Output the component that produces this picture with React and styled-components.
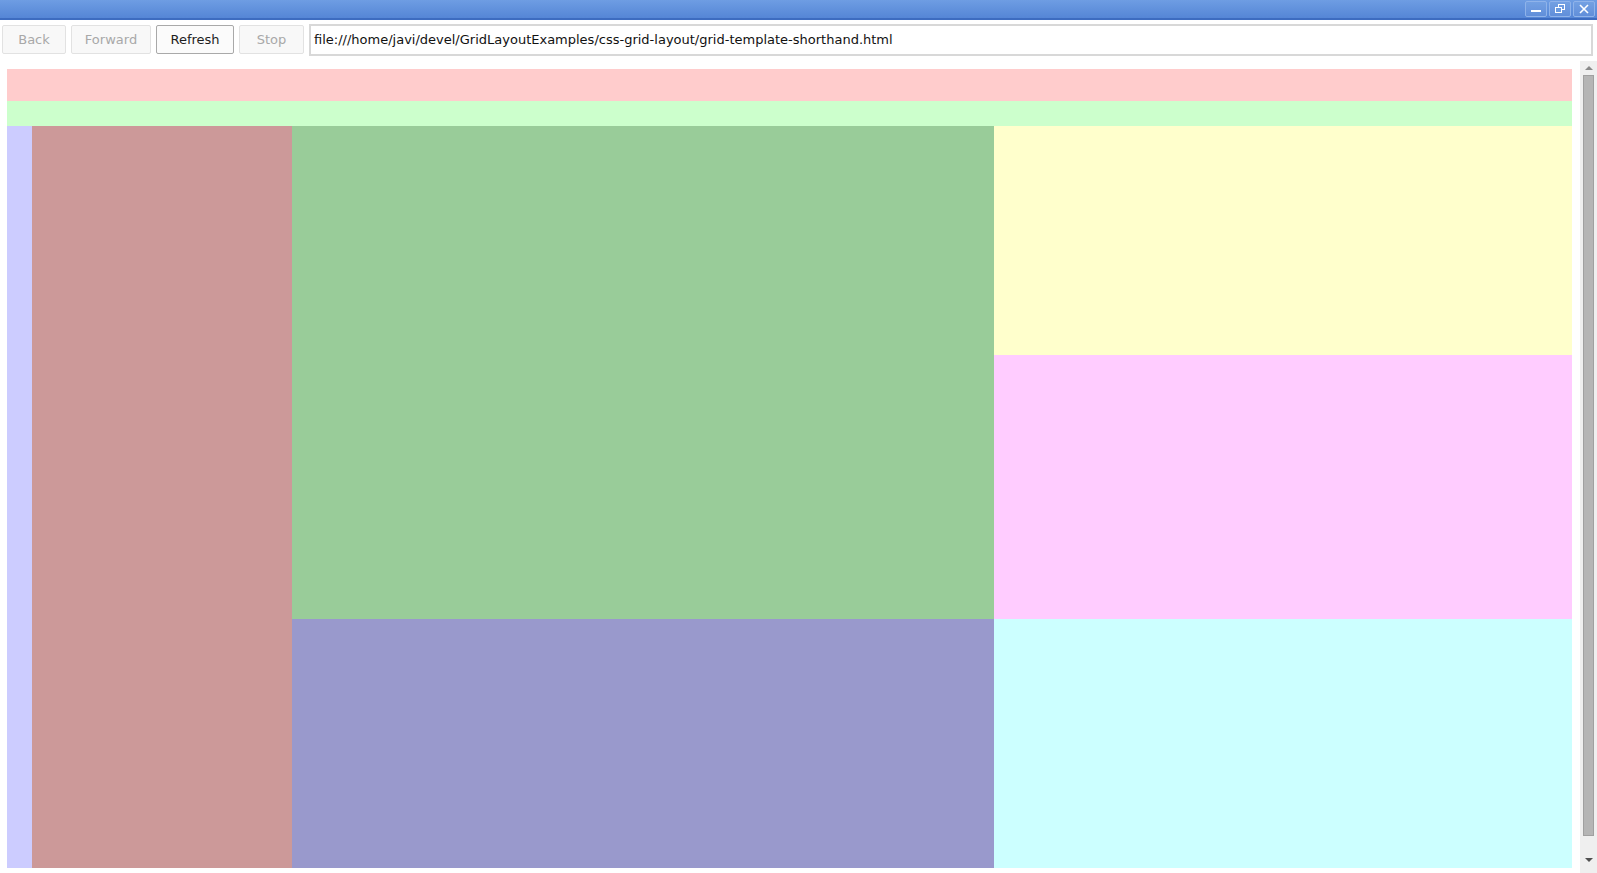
import React from "react";
import styled, { createGlobalStyle } from "styled-components";

const colors = {
  pink: "#ffcccc",
  mint: "#ccffcc",
  lavender: "#ccccff",
  rose: "#cc9999",
  sage: "#99cc99",
  cream: "#ffffcc",
  orchid: "#ffccff",
  periwinkle: "#9999cc",
  aqua: "#ccffff",
};

const areas = [
  { name: "head", color: colors.pink },
  { name: "nav", color: colors.mint },
  { name: "edge", color: colors.lavender },
  { name: "side", color: colors.rose },
  { name: "main", color: colors.sage },
  { name: "top", color: colors.cream },
  { name: "mid", color: colors.orchid },
  { name: "foot", color: colors.periwinkle },
  { name: "corner", color: colors.aqua },
];

const buttons = [
  { label: "Back", width: 64, enabled: false },
  { label: "Forward", width: 80, enabled: false },
  { label: "Refresh", width: 78, enabled: true },
  { label: "Stop", width: 65, enabled: false },
];

const App = () => {
  return (
    <StyledRoot>
      <GlobalStyle />
      <StyledTitleBar>
        <StyledWindowButton>
          <svg width="12" height="12" viewBox="0 0 12 12">
            <rect x="1" y="7" width="10" height="2" fill="#fff" />
          </svg>
        </StyledWindowButton>
        <StyledWindowButton>
          <svg width="12" height="12" viewBox="0 0 12 12" fill="none" stroke="#fff">
            <rect x="4.5" y="1.5" width="6" height="5" />
            <rect x="1.5" y="4.5" width="6" height="5" fill="#6b9be0" />
          </svg>
        </StyledWindowButton>
        <StyledWindowButton>
          <svg width="12" height="12" viewBox="0 0 12 12" stroke="#fff" strokeWidth="1.6">
            <path d="M2 2 L10 10 M10 2 L2 10" />
          </svg>
        </StyledWindowButton>
      </StyledTitleBar>
      <StyledToolbar>
        {buttons.map((b) => (
          <StyledButton key={b.label} width={b.width} enabled={b.enabled}>
            {b.label}
          </StyledButton>
        ))}
        <StyledAddress>
          file:///home/javi/devel/GridLayoutExamples/css-grid-layout/grid-template-shorthand.html
        </StyledAddress>
      </StyledToolbar>
      <StyledViewport>
        <StyledPage>
          <StyledGrid>
            {areas.map((a) => (
              <StyledCell key={a.name} area={a.name} color={a.color} />
            ))}
          </StyledGrid>
        </StyledPage>
        <StyledScrollbar>
          <StyledArrow />
          <StyledTrack>
            <StyledThumb />
          </StyledTrack>
          <StyledArrow down />
        </StyledScrollbar>
      </StyledViewport>
    </StyledRoot>
  );
};

export default App;

const GlobalStyle = createGlobalStyle`
  html, body {
    margin: 0;
    padding: 0;
    background: #ffffff;
    overflow: hidden;
  }
`;

const StyledRoot = styled.div`
  width: 1597px;
  height: 873px;
  display: flex;
  flex-direction: column;
  font-family: "DejaVu Sans", "Liberation Sans", sans-serif;
  background: #ffffff;
`;

const StyledTitleBar = styled.div`
  height: 17px;
  border-bottom: 2px solid #3d6cc0;
  background: linear-gradient(#6e9de3, #5586d6);
  display: flex;
  justify-content: flex-end;
  align-items: flex-start;
  gap: 2px;
  padding: 1px 2px 0 0;
`;

const StyledWindowButton = styled.div`
  width: 20px;
  height: 14px;
  border: 1px solid #8fb3ea;
  border-radius: 2px;
  display: flex;
  align-items: center;
  justify-content: center;
  background: rgba(255, 255, 255, 0.06);
`;

const StyledToolbar = styled.div`
  height: 41px;
  display: flex;
  align-items: center;
  gap: 5px;
  padding: 0 4px 2px 2px;
  box-sizing: border-box;
`;

const StyledButton = styled.div`
  width: ${(p) => p.width}px;
  height: 29px;
  box-sizing: border-box;
  display: flex;
  align-items: center;
  justify-content: center;
  font-size: 13px;
  border-radius: 2px;
  background: ${(p) => (p.enabled ? "#fbfbfb" : "#f8f8f8")};
  border: 1px solid ${(p) => (p.enabled ? "#a9a9a9" : "#e2e2e2")};
  color: ${(p) => (p.enabled ? "#1e1e1e" : "#a8a8a8")};
`;

const StyledAddress = styled.div`
  flex: 1;
  height: 32px;
  box-sizing: border-box;
  border: 2px solid #d8d8d8;
  display: flex;
  align-items: center;
  padding-left: 3px;
  font-size: 13px;
  color: #111111;
  white-space: nowrap;
`;

const StyledViewport = styled.div`
  flex: 1;
  display: flex;
  min-height: 0;
`;

const StyledPage = styled.div`
  flex: 1;
  padding: 8px 8px 0 7px;
  overflow: hidden;
`;

const StyledGrid = styled.div`
  display: grid;
  grid-template-columns: 25px 260px 702px 578px;
  grid-template-rows: 32px 25px 229px 264px 249px;
  grid-template-areas:
    "head head head head"
    "nav nav nav nav"
    "edge side main top"
    "edge side main mid"
    "edge side foot corner";
`;

const StyledCell = styled.div`
  grid-area: ${(p) => p.area};
  background: ${(p) => p.color};
`;

const StyledScrollbar = styled.div`
  width: 17px;
  background: #efefef;
  display: flex;
  flex-direction: column;
  align-items: center;
  padding-bottom: 6px;
`;

const StyledArrow = styled.div`
  height: 14px;
  width: 17px;
  display: flex;
  align-items: center;
  justify-content: center;
  &::before {
    content: "";
    border-left: 4px solid transparent;
    border-right: 4px solid transparent;
    ${(p) =>
      p.down
        ? "border-top: 4px solid #505050;"
        : "border-bottom: 4px solid #8a8a8a;"}
  }
`;

const StyledTrack = styled.div`
  flex: 1;
  width: 100%;
  display: flex;
  justify-content: center;
  align-items: flex-start;
`;

const StyledThumb = styled.div`
  width: 11px;
  height: 761px;
  box-sizing: border-box;
  background: #b5b5b5;
  border: 1px solid #a0a0a0;
`;
